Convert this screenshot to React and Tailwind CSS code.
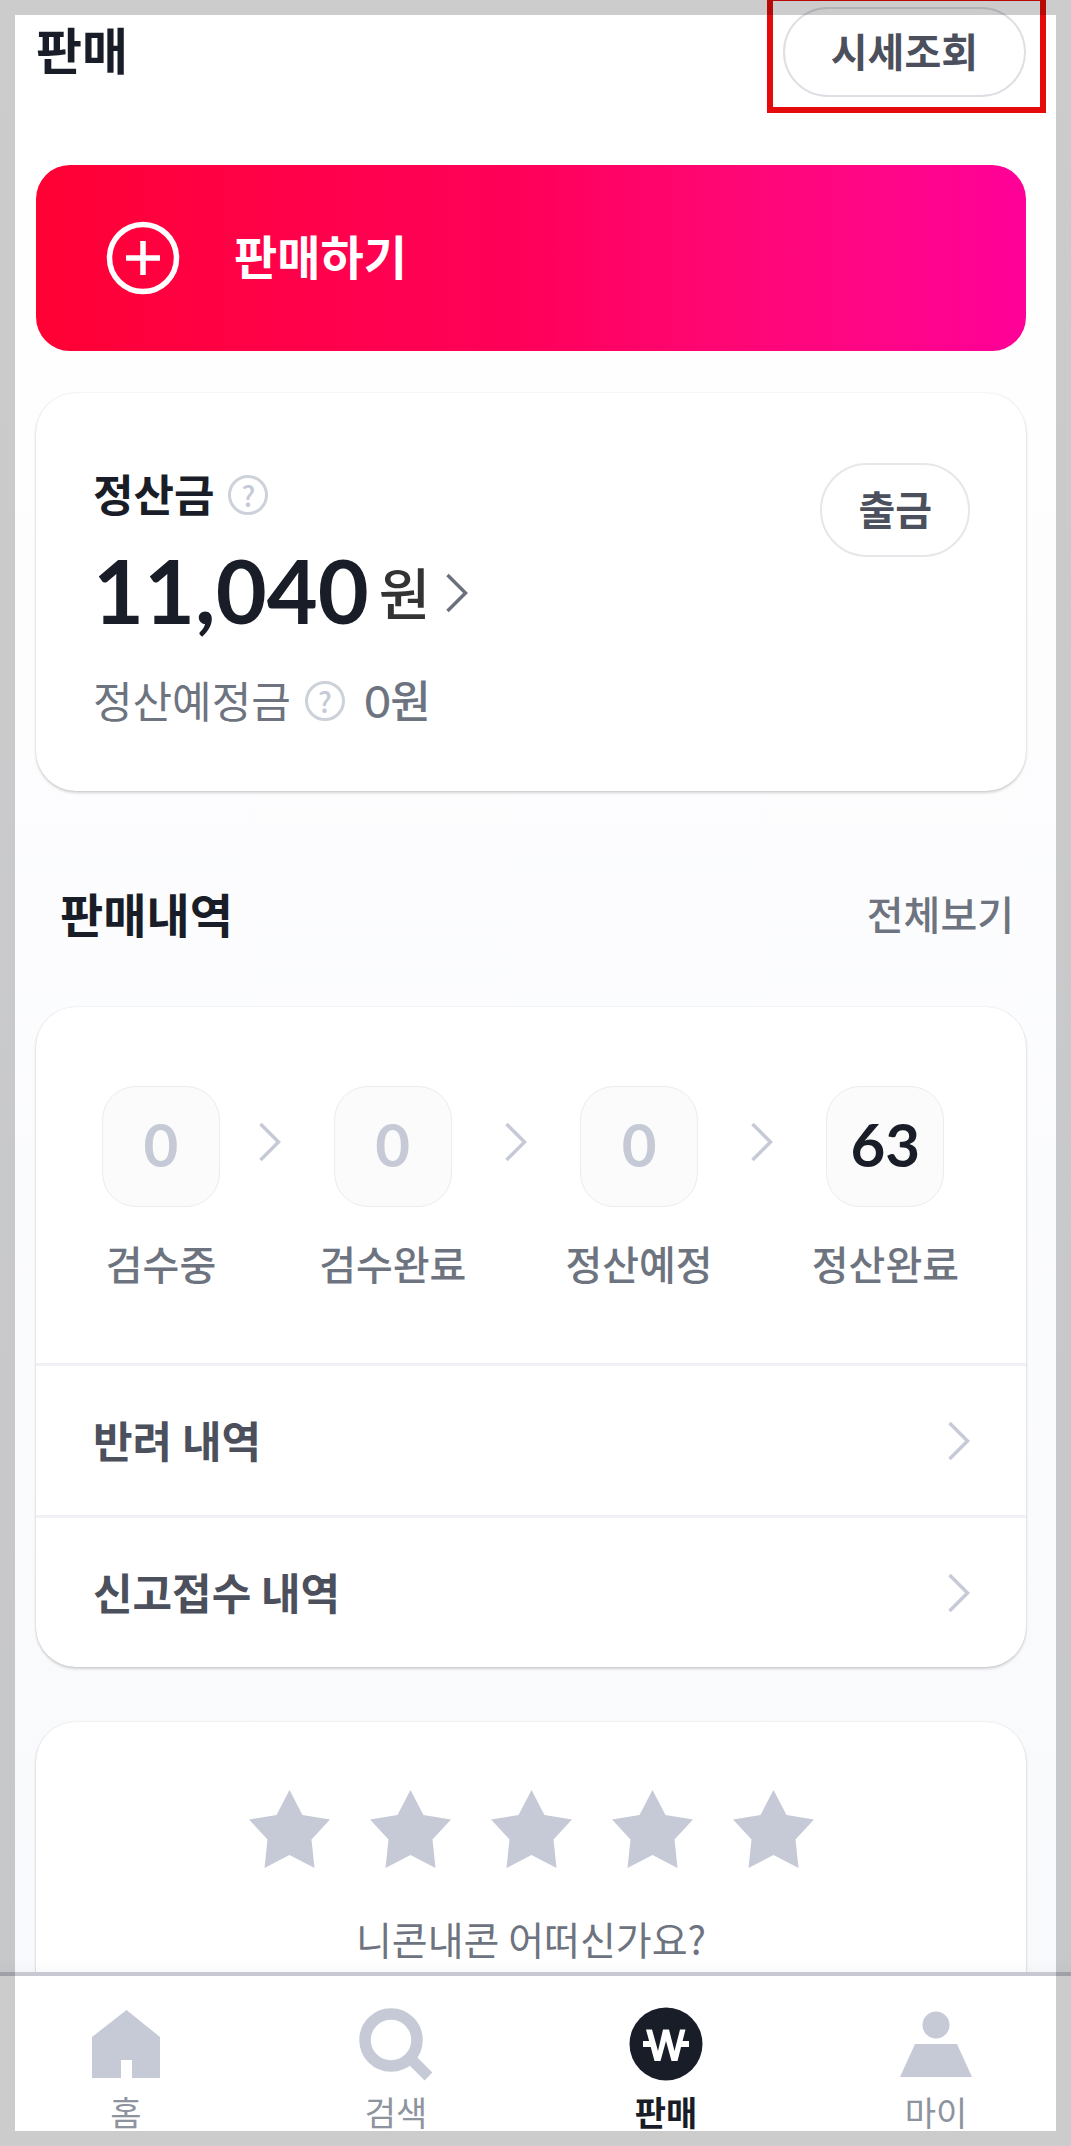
import React from "react";

const stages = [
  { label: "검수중", count: 0 },
  { label: "검수완료", count: 0 },
  { label: "정산예정", count: 0 },
  { label: "정산완료", count: 63 },
];

function Chevron({ className }) {
  return (
    <svg width="22" height="40" viewBox="0 0 22 40" fill="none" aria-hidden="true" className={className}>
      <path d="M1.5 2 L19.5 20 L1.5 38" stroke="currentColor" strokeWidth="3.500" />
    </svg>
  );
}

function HelpButton({ label }) {
  return (
    <button
      type="button"
      aria-label={label}
      className="flex size-10 items-center justify-center rounded-full border-[3px] border-[#cdd1d9] text-[28px] leading-8 font-medium text-[#c5cad6]"
    >
      ?
    </button>
  );
}

function Star() {
  return (
    <svg width="81" height="78" viewBox="0 0 81 78" fill="#c5cad6" aria-hidden="true">
      <path d="M40.500 0 L53.500 25 L81 29.500 L62.500 49.500 L65.500 78 L40.500 65 L15.500 78 L18.500 49.500 L0 29.500 L27.500 25 Z" />
    </svg>
  );
}

function HomeIcon() {
  return (
    <svg width="76" height="76" viewBox="0 0 76 76" fill="#c5cad6" aria-hidden="true">
      <path d="M38.500 4 L72 31 V72 H44 V54 H33 V72 H4 V31 Z" />
    </svg>
  );
}

function SearchIcon() {
  return (
    <svg width="76" height="76" viewBox="0 0 76 76" fill="none" stroke="#c5cad6" aria-hidden="true">
      <circle cx="33" cy="34" r="26" strokeWidth="11.500" />
      <path d="M53 53 L70.500 70.500" strokeWidth="11" />
    </svg>
  );
}

function WonIcon() {
  return (
    <svg width="76" height="76" viewBox="0 0 76 76" fill="none" aria-hidden="true">
      <circle cx="38" cy="38" r="36.500" fill="#191d27" />
      <path d="M15 38 H24 M52 38 H61" stroke="#fff" strokeWidth="6" />
      <path d="M18 23.500 H24 L30 45 L35 23.500 H41 L46.500 45 L52 23.500 H57.500 L49.500 55 H43.500 L38 35 L32.500 55 H26.500 Z" fill="#fff" />
    </svg>
  );
}

function PersonIcon() {
  return (
    <svg width="76" height="76" viewBox="0 0 76 76" fill="#c5cad6" aria-hidden="true">
      <circle cx="38" cy="19" r="13.500" />
      <path d="M17 38 H59 L74 71 H2 Z" />
    </svg>
  );
}

const tabs = [
  { label: "홈", Icon: HomeIcon },
  { label: "검색", Icon: SearchIcon },
  { label: "판매", Icon: WonIcon, active: true },
  { label: "마이", Icon: PersonIcon },
];

const card =
  "rounded-[40px] bg-white shadow-[0_0_2px_rgba(0,0,0,0.12),0_2px_3px_rgba(0,0,0,0.16)]";

export default function App() {
  return (
    <div className="relative flex h-screen flex-col overflow-hidden bg-linear-to-b from-white to-[#f8f9fc] font-['Noto_Sans_CJK_KR',sans-serif] text-[#191d27]">
      <main className="min-h-0 flex-1 overflow-hidden pr-[45px] pl-9">
        <header className="flex items-center justify-between pt-[7px]">
          <h1 className="pb-2 text-[50px] leading-[64px] font-bold">판매</h1>
          <div className="relative">
            <button
              type="button"
              className="h-[90px] rounded-full border-2 border-[#dedfe4] bg-white px-[46px] pb-1 text-[40px] leading-[60px] font-bold text-[#4b505c]"
            >
              시세조회
            </button>
            <span className="pointer-events-none absolute -top-3 -right-5 -bottom-4 -left-4 border-[6px] border-[#e60b0b]" />
          </div>
        </header>

        <button
          type="button"
          className="mt-[68px] flex h-[186px] w-full items-center gap-[54px] rounded-[34px] bg-linear-to-r from-[#ff0033] via-[#ff005a] to-[#ff0098] pl-[70px] text-white"
        >
          <svg width="74" height="74" viewBox="0 0 74 74" fill="none" stroke="currentColor" strokeWidth="5.500" aria-hidden="true">
            <circle cx="37" cy="37" r="33.500" />
            <path d="M37 20 V54 M20 37 H54" />
          </svg>
          <span className="pb-1.5 text-[47px] leading-[64px] font-bold">판매하기</span>
        </button>

        <section className={`${card} mt-[42px] flex items-start justify-between pt-[70px] pr-14 pb-[60px] pl-[57px]`}>
          <div className="pt-0.5">
            <div className="flex items-center gap-3.5">
              <h2 className="pb-1 text-[44px] leading-[56px] font-bold">정산금</h2>
              <HelpButton label="정산금 안내" />
            </div>
            <a href="#balance" className="mt-4 flex items-center">
              <strong className="pb-1.5 font-['Lato',sans-serif] text-[88px] leading-[98px] font-bold">11,040</strong>
              <span className="ml-2.5 pb-1 text-[56px] leading-[64px] font-medium text-[#333]">원</span>
              <Chevron className="ml-4 text-[#6b717c]" />
            </a>
            <div className="mt-[26px] flex items-center text-[43px] leading-[56px] text-[#6e747f]">
              <span className="mr-3.5 pb-1">정산예정금</span>
              <HelpButton label="정산예정금 안내" />
              <span className="ml-5 font-['Lato','Noto_Sans_CJK_KR',sans-serif] text-[44px] font-medium">0원</span>
            </div>
          </div>
          <button
            type="button"
            className="h-[94px] rounded-full border-2 border-[#e6e7ea] px-9 pb-1 text-[40px] leading-[60px] font-bold text-[#4b505c]"
          >
            출금
          </button>
        </section>

        <div className="mt-[90px] flex items-center justify-between pr-3 pl-6">
          <h2 className="text-[47px] leading-[64px] font-bold">판매내역</h2>
          <a href="#all" className="text-[40px] leading-[64px] font-medium text-[#6e747f]">전체보기</a>
        </div>

        <section className={`${card} mt-[62px]`}>
          <ol className="flex items-start justify-between pt-[79px] pr-[67px] pb-[72px] pl-[66px]">
            {stages.map((stage, i) => (
              <React.Fragment key={stage.label}>
                {i > 0 && (
                  <li aria-hidden="true" className="pt-9">
                    <Chevron className="text-[#c5cad6]" />
                  </li>
                )}
                <li className="flex flex-col items-center gap-7">
                  <span
                    className={`flex h-[121px] w-[118px] items-center justify-center rounded-[34px] border border-[#ececee] bg-[#fbfbfb] pb-1.5 font-['Lato',sans-serif] text-[60px] leading-[72px] font-bold ${
                      stage.count ? "text-[#191d27]" : "text-[#c5cad6]"
                    }`}
                  >
                    {stage.count}
                  </span>
                  <span className="text-[40px] leading-[56px] font-medium text-[#6e747f]">{stage.label}</span>
                </li>
              </React.Fragment>
            ))}
          </ol>
          {["반려 내역", "신고접수 내역"].map((label) => (
            <a
              key={label}
              href="#history"
              className="flex h-[152px] items-center justify-between border-t-[3px] border-[#f0f1f4] pr-14 pl-[57px] text-[43px] leading-[60px] font-bold text-[#4b505c]"
            >
              <span className="pb-1">{label}</span>
              <Chevron className="text-[#c5cad6]" />
            </a>
          ))}
        </section>

        <section className={`${card} mt-[55px] flex flex-col items-center pt-[68px] pb-40`}>
          <div className="flex gap-10">
            {[1, 2, 3, 4, 5].map((n) => (
              <button key={n} type="button" aria-label={`별점 ${n}점`}>
                <Star />
              </button>
            ))}
          </div>
          <p className="mt-[42px] text-[39px] leading-[56px] text-[#6e747f]">니콘내콘 어떠신가요?</p>
        </section>
      </main>

      <nav className="flex justify-between border-t-4 border-[#c8c8d3] bg-white pt-[30px] pr-[81px] pb-3 pl-[72px] shadow-[0_-4px_12px_rgba(0,0,0,0.03)]">
        {tabs.map(({ label, Icon, active }) => (
          <a
            key={label}
            href="#tab"
            aria-current={active ? "page" : undefined}
            className={`flex w-[108px] flex-col items-center gap-2 text-[34px] leading-[44px] ${
              active ? "font-bold text-[#191d27]" : "text-[#8e949e]"
            }`}
          >
            <Icon />
            {label}
          </a>
        ))}
      </nav>

      <div className="pointer-events-none absolute inset-0 border-[15px] border-black/20" />
    </div>
  );
}
